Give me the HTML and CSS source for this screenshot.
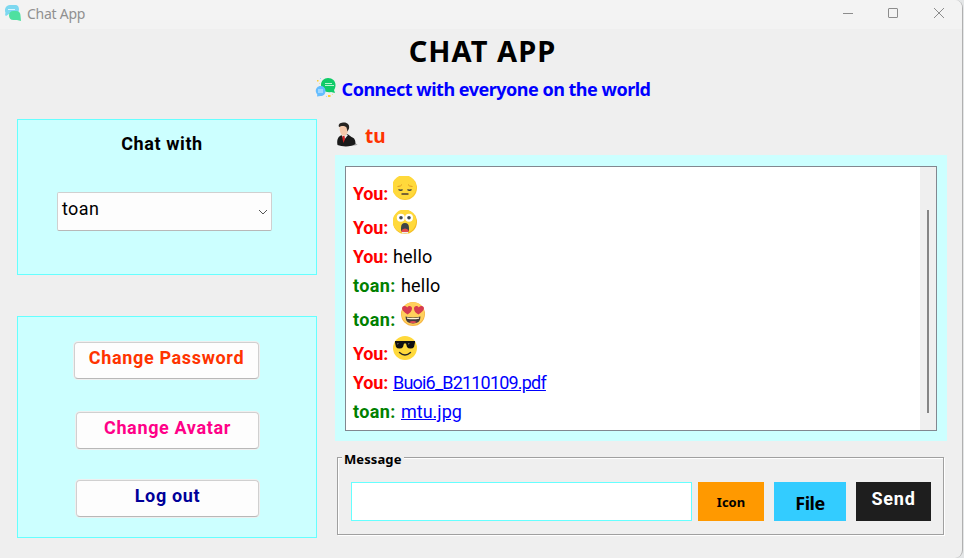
FILE: index.html
```html
<!DOCTYPE html>
<html lang="en">
<head>
<meta charset="utf-8">
<title>Chat App</title>
<link rel="stylesheet" href="styles.css">
</head>
<body>
<div class="window">
  <header class="titlebar">
    <svg class="app-icon" width="18" height="18" viewBox="0 0 18 18">
      <path d="M6 1h5c3 0 4 2 4 4.500S13 10 11 10H5l-3 2c-1-.2-1-2-.5-3C0 5 2 1 6 1z" fill="#7dd8f0"/>
      <path d="M4 5.500h7" stroke="#d9f6ff" stroke-width="1"/>
      <path d="M9.500 7h2.500c3 0 4.500 2 4.500 4.500L17 17l-4-1H9.500C6.500 16 5 14 5 11.500S6.500 7 9.500 7z" fill="#4fe0a0"/>
    </svg>
    <span class="app-name">Chat App</span>
    <div class="controls">
      <svg width="12" height="12" viewBox="0 0 12 12"><path d="M2 6.500h10" /></svg>
      <svg width="12" height="12" viewBox="0 0 12 12"><rect x="1.500" y="1.500" width="9" height="9" rx=".5"/></svg>
      <svg width="12" height="12" viewBox="0 0 12 12"><path d="M1 1l10 10M11 1L1 11"/></svg>
    </div>
  </header>
  <div class="heading">
    <h1>CHAT APP</h1>
    <div class="tagline">
      <svg width="22" height="22" viewBox="0 0 22 22">
        <path d="M13 1c4.500 0 7.500 3 7.500 7 0 2.500-.8 4-1.500 5l1 3-4-1c-5 1-10-2-10-7 0-4 3-7 7-7z" fill="#0fcb67"/>
        <path d="M10 6.500h7M10 8.500h9" stroke="#b7f5d0" stroke-width="1.200"/>
        <path d="M5.500 9c3 0 5 2 5 5s-2 5-5 5L2 19.500l.3-2C-1 14 1.500 9 5.500 9z" fill="#64bdff"/>
        <path d="M3 13h5M3 15h5" stroke="#d8f0ff" stroke-width="1.200"/>
        <g fill="#ffce35"><rect x="2" y="3" width="1.500" height="1.500"/><rect x="13" y="18" width="2.500" height="2"/></g>
        <g fill="#f3dfa0"><rect x="4" y="6" width="1" height="1"/><rect x="17" y="17" width="1" height="1"/></g>
        <g fill="#9bd7ff"><rect x="5" y="1" width="1" height="1"/><rect x="11" y="19" width="1" height="1"/></g>
      </svg>
      <span>Connect with everyone on the world</span>
    </div>
  </div>
  <main class="layout">
    <aside class="side">
      <section class="panel partner">
        <h2>Chat with</h2>
        <div class="select"><span>toan</span>
          <svg width="10" height="6" viewBox="0 0 10 6"><path d="M1 1l4 4 4-4" fill="none" stroke="#555" stroke-width="1"/></svg>
        </div>
      </section>
      <section class="panel actions">
        <button class="btn password">Change Password</button>
        <button class="btn avatar">Change Avatar</button>
        <button class="btn logout">Log out</button>
      </section>
    </aside>
    <section class="chat">
      <div class="user">
        <svg width="22" height="25" viewBox="0 0 22 25">
          <ellipse cx="13" cy="22.500" rx="8.500" ry="1.500" fill="#aaa"/>
          <path d="M1.500 23c-1-6 1-9 4.500-10l5.500-1 4 3c3 1 4 3 4 7-4 3-13 3-18 1z" fill="#191919"/>
          <path d="M5 12l3-1 4 2-4 5z" fill="#eee"/>
          <path d="M6.500 14l2 0 .5 3-1.500 4-1-4z" fill="#cf2020"/>
          <path d="M3.500 4c1-2 7-3 9 0 0 4-1 9-4 10-4 0-5-5-5-10z" fill="#f5c9ab"/>
          <path d="M3 5C2 2 4 1 7 .5c4-.5 7 2 6 6l-1.500 3-1-4C8 3 5 4 3 5z" fill="#272421"/>
        </svg>
        <span>tu</span>
      </div>
      <div class="board">
        <div class="scroll">
          <div class="messages">
            <div class="row pic"><b class="you">You:</b>
              <svg width="24" height="24" viewBox="0 0 24 24"><circle cx="12" cy="12" r="12" fill="#fbc92d"/><path d="M20 3a12 12 0 0 1-9 20A12 12 0 1 1 20 3z" fill="#ffd93b"/><path d="M5.500 13.500q2.500 1.500 4 0M14.500 13.500q2 1.500 4 0" fill="none" stroke="#3c3c3c" stroke-width="1.400"/><path d="M4.500 10.500Q8 10.500 9 8.500M19.500 10.500Q16 10.500 15 8.500" fill="none" stroke="#e19b20" stroke-width="1"/><path d="M8.500 18h7" stroke="#614f32" stroke-width="1.700"/></svg></div>
            <div class="row pic"><b class="you">You:</b>
              <svg width="24" height="24" viewBox="0 0 24 24"><circle cx="12" cy="12" r="12" fill="#f4bd25"/><path d="M20 3a12 12 0 0 1-8 20A11.800 11.800 0 1 1 20 3z" fill="#ffd93b"/><circle cx="7.800" cy="7.800" r="4" fill="#fff"/><circle cx="16" cy="7.800" r="4" fill="#fff"/><circle cx="8" cy="7.800" r="1.800" fill="#3d4850"/><circle cx="16" cy="7.800" r="1.800" fill="#3d4850"/><path d="M8 21v-3q0-5 4-5t4 5v3q-4 3-8 0z" fill="#3e4347"/><path d="M8.500 20q3.500-3 7 0v2h-7z" fill="#e24b4b"/><path d="M9 22h6v1.500H9z" fill="#eee"/></svg></div>
            <div class="row"><b class="you">You:</b><span>hello</span></div>
            <div class="row"><b class="peer">toan:</b><span>hello</span></div>
            <div class="row pic"><b class="peer">toan:</b>
              <svg width="24" height="24" viewBox="0 0 24 24"><circle cx="12" cy="12" r="12" fill="#f6b545"/><circle cx="12" cy="11.500" r="11.300" fill="#ffd05c"/><path d="M6.500 12.500C3 10 .5 8 1.200 5.500 2 3.500 5 3.500 6.200 5.500 8 3 11 4 11 6.500c0 2.500-2 4.500-4.500 6z" fill="#d63b50"/><path d="M17.500 12.500C14.500 11 13 9 13 6.500c0-2.500 3-3.500 4.800-1 1.200-2 4.200-2 5 0 .7 2.500-1.800 4.500-5.300 7z" fill="#d63b50"/><path d="M4.500 14.500q7.500 2 15 0 0 7-7.500 7t-7.500-7z" fill="#463c3a"/><path d="M6 15.500q6 1.200 12 0v1.200q-6 1.200-12 0z" fill="#fff3d6"/><path d="M8 20q4-2 8 0-4 2.500-8 0z" fill="#e04b55"/></svg></div>
            <div class="row pic"><b class="you">You:</b>
              <svg width="24" height="24" viewBox="0 0 24 24"><circle cx="12" cy="12" r="12" fill="#ffd93b"/><path d="M2 5h20v1.500l-1 4.500q-1 1.500-3.500 1.500T14 11l-1-3.500h-2L10 11q-1 1.500-3.500 1.500T3 11L2 6.500z" fill="#111"/><path d="M4 7l2 0-1.500 2zM15 7h2l-2 2z" fill="#5a5a5a"/><path d="M6.500 16.500q5.500 5 11 0" fill="none" stroke="#262626" stroke-width="1.400" stroke-linecap="round"/></svg></div>
            <div class="row"><b class="you">You:</b><a class="pdf">Buoi6_B2110109.pdf</a></div>
            <div class="row"><b class="peer">toan:</b><a>mtu.jpg</a></div>
          </div>
          <div class="track"><div class="thumb"></div></div>
        </div>
      </div>
      <div class="composer">
        <span class="legend">Message</span>
        <div class="inner">
          <input class="field" type="text" aria-label="Message">
          <button class="flat icon">Icon</button>
          <button class="flat file">File</button>
          <button class="flat send">Send</button>
        </div>
      </div>
    </section>
  </main>
</div>
</body>
</html>
```
FILE: styles.css
```css
* { box-sizing: border-box; }
body { margin: 0; background: #e4e6e7; overflow: hidden; }
.window {
  width: 963px; height: 558px; background: #efefef;
  border-right: 1px solid #b0b0b0; border-radius: 0 8px 8px 0; overflow: hidden;
  font-family: "Roboto", "Liberation Sans", sans-serif; font-size: 18px;
}
.titlebar { height: 29px; background: #f3f3f3; display: flex; align-items: center; padding: 0 17px 3px 4px; }
.app-icon { display: block; }
.app-name { font: 14px/20px "Noto Sans", sans-serif; color: #909090; margin: 2px 0 0 5px; letter-spacing: -.25px; }
.controls { margin-left: auto; display: flex; gap: 34px; }
.controls svg { display: block; fill: none; stroke: #8c8c8c; stroke-width: 1; }
.heading { height: 90px; padding-top: 2px; text-align: center; font-family: "Noto Sans", sans-serif; font-weight: 700; }
h1 { margin: 0; font-size: 29px; line-height: 40px; padding-left: 3px; letter-spacing: 1.05px; }
.tagline { display: flex; justify-content: center; gap: 5px; color: #00f; font-size: 18px; line-height: 24px; letter-spacing: -.5px; margin: 6px 0 0 3px; white-space: nowrap; }
.tagline svg { display: block; }
.layout { display: grid; grid-template-columns: 300px 612px; gap: 18px; padding-left: 17px; }
.panel { background: #cff; border: 1px solid #66ffff; }
.partner { height: 156px; margin-bottom: 41px; padding: 12px 44px 0 39px; }
h2 { margin: 0; font-size: 18px; line-height: 24px; font-weight: 700; letter-spacing: .6px; text-align: center; padding-right: 5px; }
.select {
  margin-top: 36px; height: 39px; background: #fdfdfd; border: 1px solid #d0d0d0; border-bottom-color: #b8b8b8;
  border-radius: 2px; display: flex; justify-content: space-between; padding: 3px 3px 0 4px; line-height: 25px; letter-spacing: .4px;
}
.select svg { margin-top: 13px; }
.actions { height: 222px; display: flex; flex-direction: column; padding: 25px 57px 0 56px; align-items: flex-end; }
.btn {
  width: 183px; height: 37px; padding: 0 0 5px; font: 700 18px/24px "Roboto", sans-serif; letter-spacing: .65px;
  background: #fdfdfd; border: 1px solid #d0d0d0; border-bottom-color: #b8b8b8; border-radius: 4px; box-shadow: 0 0 0 1px #efefef;
}
.password { width: 185px; color: #f30; margin-bottom: 33px; }
.avatar { color: #f08; margin-bottom: 31px; }
.logout { color: #009; }
.user { height: 36px; display: flex; gap: 8px; padding: 3px 0 0 1px; font: 700 19px/28px "Noto Sans", sans-serif; color: #f30; }
.user svg { margin-right: -1px; }
.board { height: 286px; padding: 11px 10px 10px; background: #cff; }
.scroll { height: 265px; border: 1px solid #828790; background: #fff; display: flex; }
.messages { flex: 1; padding: 9px 0 0 7px; }
.row { height: 29px; display: flex; align-items: baseline; gap: 5px; line-height: 26px; white-space: nowrap; }
.row.pic { height: 34px; }
.row b { letter-spacing: .4px; }
.row span { letter-spacing: .2px; }
.row svg { display: block; }
.row .you { color: red; width: 35px; letter-spacing: -.2px; }
.peer { color: green; width: 43px; }
.row a { color: #00f; text-decoration: underline; }
.row .pdf { letter-spacing: -.8px; }
.track { width: 16px; background: #efefef; padding: 43px 0 0 7px; }
.thumb { width: 2px; height: 203px; background: #858585; }
.composer { margin: 10px 0 0 2px; width: 608px; }
.legend { display: block; width: 62px; margin-left: 5px; height: 16px; padding-left: 2px; background: #efefef; font: 700 13px/16px "Noto Sans", sans-serif; letter-spacing: .1px; position: relative; }
.inner {
  height: 78px; margin-top: -10px; border: 1px solid #a0a0a0; box-shadow: 1px 1px 0 #fff, inset 1px 1px 0 #fff;
  display: flex; padding: 24px 0 0 13px; width: 607px;
}
.field { width: 341px; height: 39px; border: 1px solid #66ffff; background: #fff; padding: 0 6px; }
.flat { height: 39px; border: 0; padding: 0; font-family: "Noto Sans", sans-serif; font-weight: 700; }
.icon { width: 66px; margin-left: 6px; background: #f90; font-size: 13px; padding-top: 1px; }
.file { width: 72px; margin-left: 10px; background: #3cf; font-size: 18px; padding-top: 2px; letter-spacing: -.5px; }
.send { width: 75px; margin-left: 10px; background: #1e1e1e; color: #fff; font: 700 18px/24px "Roboto", sans-serif; letter-spacing: .8px; padding-bottom: 5px; }
```
